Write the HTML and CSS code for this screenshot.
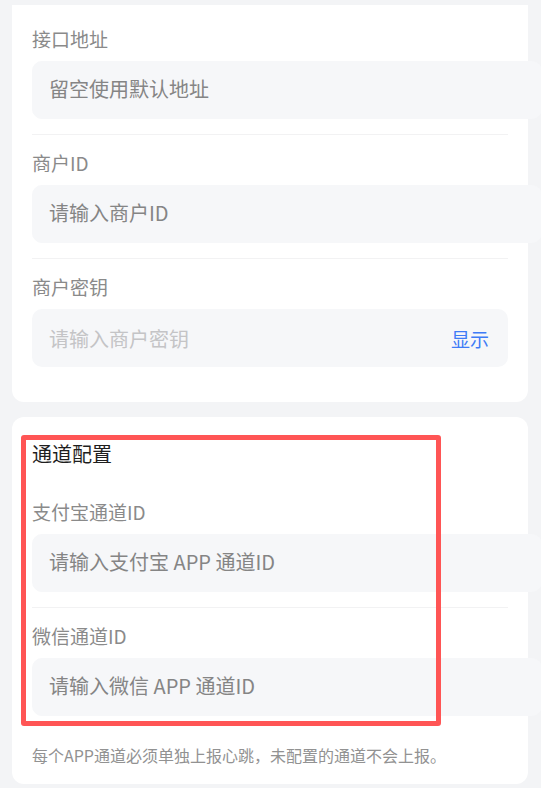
FILE: index.html
```html
<!DOCTYPE html>
<html lang="zh-CN">
<head>
<meta charset="utf-8">
<title>支付配置</title>
<link rel="stylesheet" href="styles.css">
</head>
<body>
<div class="page">
  <section class="card card-clipped">
    <div class="field">
      <label class="label">接口地址</label>
      <input class="input" type="text" placeholder="留空使用默认地址">
    </div>
    <div class="field">
      <label class="label">商户ID</label>
      <input class="input" type="text" placeholder="请输入商户ID">
    </div>
    <div class="field field-last">
      <label class="label">商户密钥</label>
      <div class="input-wrap">
        <input class="input-inner" type="password" placeholder="请输入商户密钥">
        <span class="toggle">显示</span>
      </div>
    </div>
  </section>

  <section class="card card-channels">
    <h2 class="title">通道配置</h2>
    <div class="field">
      <label class="label">支付宝通道ID</label>
      <input class="input" type="text" placeholder="请输入支付宝 APP 通道ID">
    </div>
    <div class="field field-last">
      <label class="label">微信通道ID</label>
      <input class="input" type="text" placeholder="请输入微信 APP 通道ID">
    </div>
    <p class="note">每个APP通道必须单独上报心跳，未配置的通道不会上报。</p>
    <div class="highlight"></div>
  </section>
</div>
</body>
</html>
```
FILE: styles.css
```css
html, body {
  margin: 0;
  padding: 0;
  overflow: hidden;
}

body {
  background: #f3f4f6;
  font-family: "Noto Sans CJK SC", "Noto Sans", sans-serif;
  color: #1f1f1f;
}

.page {
  padding: 5px 13px 0 12px;
  display: flex;
  flex-direction: column;
  gap: 15px;
}

.card {
  background: #ffffff;
  border-radius: 12px;
  padding: 23px 20px 17px;
  position: relative;
}

.card-clipped {
  border-radius: 0 0 12px 12px;
  padding: 6px 20px 20px;
}

.field {
  display: flex;
  flex-direction: column;
  padding: 15px 0;
  border-bottom: 1px solid #f2f2f3;
}

.field-last {
  border-bottom: none;
}

.label {
  font-size: 19px;
  line-height: 26px;
  color: #8a8a8a;
  margin-bottom: 9px;
}

.input {
  box-sizing: content-box;
  width: 100%;
  height: 53px;
  padding: 0 16px 3px;
  border: 1px solid #f6f7f9;
  border-radius: 10px;
  background: #f6f7f9;
  font-family: inherit;
  font-size: 20px;
  color: #333;
  outline: none;
  margin: 0;
}

.input::placeholder {
  color: #858585;
}

.input-wrap {
  display: flex;
  align-items: center;
  box-sizing: border-box;
  height: 58px;
  padding: 0 19px 0 17px;
  border-radius: 10px;
  background: #f6f7f9;
}

.input-inner {
  flex: 1;
  min-width: 0;
  border: none;
  background: transparent;
  font-family: inherit;
  font-size: 20px;
  padding: 0;
  outline: none;
  color: #333;
}

.input-inner::placeholder {
  color: #c4c4c6;
}

.toggle {
  font-size: 19px;
  color: #3f7cf6;
}

.title {
  margin: 0 0 16px;
  font-size: 20px;
  line-height: 28px;
  font-weight: normal;
  color: #1f1f1f;
}

.note {
  margin: 12px 0 0;
  font-size: 16px;
  line-height: 24px;
  color: #929292;
}

.highlight {
  position: absolute;
  left: 9px;
  top: 18px;
  width: 420px;
  height: 291px;
  box-sizing: border-box;
  border: 5px solid #ff5555;
  border-radius: 3px;
  pointer-events: none;
}
```
